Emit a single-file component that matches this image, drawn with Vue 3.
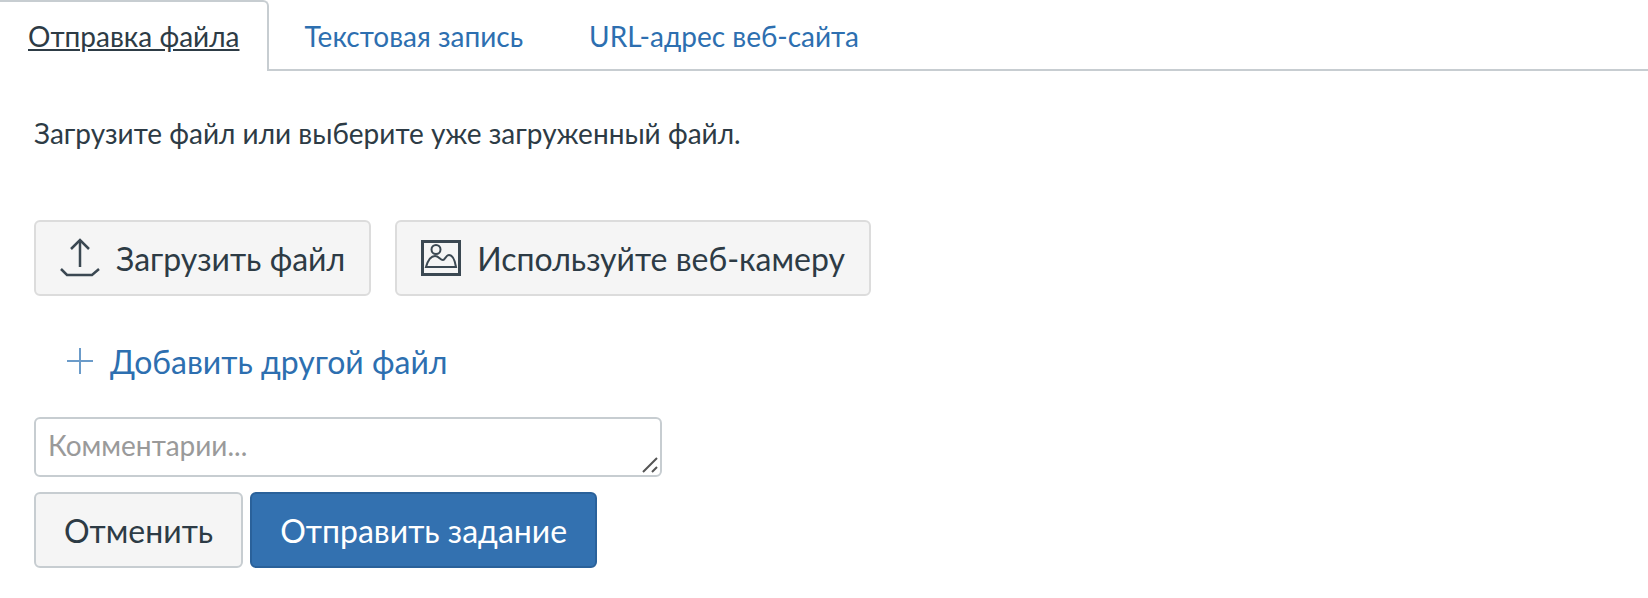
<template>
  <div class="page">
    <div class="tabs">
      <a class="tab active">Отправка файла</a>
      <a class="tab">Текстовая запись</a>
      <a class="tab">URL-адрес веб-сайта</a>
    </div>

    <div class="panel">
      <p class="hint">Загрузите файл или выберите уже загруженный файл.</p>

      <div class="actions">
        <button class="btn">
          <svg class="icon" width="40" height="40" viewBox="0 0 40 40" fill="none" stroke="#3b4852" stroke-width="2.500">
            <path d="M20 2V29" />
            <path d="M11 11L20 2L29 11" />
            <path d="M1 31L7 37H32L39 31" />
          </svg>
          Загрузить файл
        </button>
        <button class="btn">
          <svg class="icon" width="40" height="36" viewBox="0 0 40 36" fill="none" stroke="#3b4852">
            <rect x="1.500" y="1.500" width="37" height="33" stroke-width="3" />
            <circle cx="15" cy="9.500" r="4.500" stroke-width="2" />
            <path d="M5 27C7 20 10 16 14 16C18 16 19 20 22 20C24 20 25 15 28 15C32 15 34 21 35 27Z" stroke-width="2" />
          </svg>
          Используйте веб-камеру
        </button>
      </div>

      <a class="add-link">
        <svg class="plus" width="26" height="26" viewBox="0 0 26 26" fill="none" stroke="#6b9bc9" stroke-width="2">
          <path d="M13 0V26M0 13H26" />
        </svg>
        Добавить другой файл
      </a>

      <div class="comment-wrap">
        <textarea class="comment" placeholder="Комментарии..."></textarea>
        <svg class="grip" width="16" height="16" viewBox="0 0 16 16" fill="none" stroke="#555" stroke-width="2">
          <path d="M1 15L15 1M10 15L15 10" />
        </svg>
      </div>

      <div class="form-actions">
        <button class="btn small">Отменить</button>
        <button class="btn small primary">Отправить задание</button>
      </div>
    </div>
  </div>
</template>

<script setup>
</script>

<style>
html,
body {
  background: #fff;
}
</style>

<style scoped>
.page {
  width: 1648px;
  height: 598px;
  overflow: hidden;
  font-family: Lato, "Open Sans", "Noto Sans", sans-serif;
  color: #2d3b45;
}

.tabs {
  display: flex;
  box-sizing: border-box;
  height: 71px;
  border-bottom: 2px solid #c7cdd1;
}

.tab {
  padding: 20px 33px 0;
  font-size: 28px;
  line-height: 32px;
  color: #2d6fb0;
}

.tab.active {
  height: 71px;
  box-sizing: border-box;
  margin-right: 2px;
  padding: 18px 28px 0;
  color: #2d3b45;
  text-decoration: underline;
  background: #fff;
  border: 2px solid #c7cdd1;
  border-width: 2px 2px 0 0;
  border-radius: 0 6px 0 0;
}

.panel {
  padding: 0 34px;
}

.hint {
  margin: 45px 0 0;
  font-size: 28px;
  line-height: 34px;
}

.actions {
  display: flex;
  gap: 24px;
  margin-top: 70px;
}

.btn {
  display: flex;
  align-items: center;
  gap: 16px;
  height: 76px;
  padding: 0 24px;
  font: inherit;
  font-size: 32px;
  color: #2d3b45;
  background: #f5f5f5;
  border: 2px solid #dcdcdc;
  border-radius: 6px;
}

.add-link {
  display: flex;
  align-items: center;
  gap: 17px;
  margin: 46px 0 0 33px;
  font-size: 32px;
  line-height: 40px;
  color: #2d6fb0;
}

.plus {
  margin-bottom: 2px;
}

.comment-wrap {
  position: relative;
  width: 628px;
  margin-top: 35px;
}

.comment {
  display: block;
  box-sizing: border-box;
  width: 100%;
  height: 60px;
  padding: 9px 12px;
  font: inherit;
  font-size: 28px;
  color: #2d3b45;
  border: 2px solid #c7cdd1;
  border-radius: 6px;
  outline: 0;
  resize: none;
}

.comment::placeholder {
  color: #9a9a9a;
}

.grip {
  position: absolute;
  right: 4px;
  bottom: 4px;
}

.form-actions {
  display: flex;
  gap: 7px;
  margin-top: 15px;
}

.btn.small {
  padding: 0 28px;
  border-color: #c7cdd1;
}

.btn.primary {
  padding: 0 28px;
  color: #fff;
  background: #3371b0;
  border-color: #2a619a;
}
</style>
